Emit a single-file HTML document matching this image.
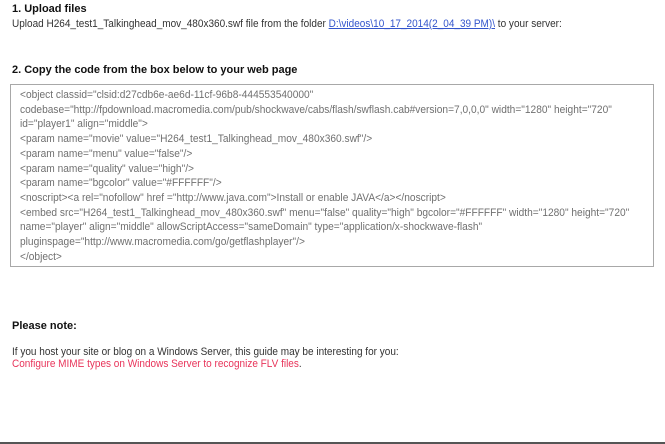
<!DOCTYPE html>
<html><head><meta charset="utf-8"><style>
html,body{margin:0;padding:0;background:#fff;width:665px;height:444px;overflow:hidden;position:relative}
body{font-family:"Liberation Sans",Arial,sans-serif;font-size:11px;color:#333}
.a{position:absolute;left:12px;white-space:nowrap;transform:scaleX(0.91);transform-origin:0 0}
.bb{transform:none}
b{color:#111}
a.l{color:#3355cc;text-decoration:underline}
.box{position:absolute;left:10px;top:84px;width:644px;height:183px;border:1px solid #a8a8a8;box-sizing:border-box}
.code{position:absolute;left:9px;top:3px;line-height:14.7px;color:#707070;white-space:nowrap;transform:scaleX(0.925);transform-origin:0 0}
.bot{position:absolute;left:0;top:442px;width:665px;height:2px;background:#555}
</style></head><body>
<div class="a bb" style="top:3px"><b>1. Upload files</b></div>
<div class="a" style="top:18px">Upload H264_test1_Talkinghead_mov_480x360.swf file from the folder <a class="l">D:\videos\10_17_2014(2_04_39 PM)\</a> to your server:</div>
<div class="a bb" style="top:64px"><b>2. Copy the code from the box below to your web page</b></div>
<div class="box"><div class="code">&lt;object classid="clsid:d27cdb6e-ae6d-11cf-96b8-444553540000"<br>codebase="http://fpdownload.macromedia.com/pub/shockwave/cabs/flash/swflash.cab#version=7,0,0,0" width="1280" height="720"<br>id="player1" align="middle"&gt;<br>&lt;param name="movie" value="H264_test1_Talkinghead_mov_480x360.swf"/&gt;<br>&lt;param name="menu" value="false"/&gt;<br>&lt;param name="quality" value="high"/&gt;<br>&lt;param name="bgcolor" value="#FFFFFF"/&gt;<br>&lt;noscript&gt;&lt;a rel="nofollow" href ="http://www.java.com"&gt;Install or enable JAVA&lt;/a&gt;&lt;/noscript&gt;<br>&lt;embed src="H264_test1_Talkinghead_mov_480x360.swf" menu="false" quality="high" bgcolor="#FFFFFF" width="1280" height="720"<br>name="player" align="middle" allowScriptAccess="sameDomain" type="application/x-shockwave-flash"<br>pluginspage="http://www.macromedia.com/go/getflashplayer"/&gt;<br>&lt;/object&gt;</div></div>
<div class="a bb" style="top:320px"><b>Please note:</b></div>
<div class="a" style="top:346px">If you host your site or blog on a Windows Server, this guide may be interesting for you:</div>
<div class="a" style="top:358px"><span style="color:#e8345a">Configure MIME types on Windows Server to recognize FLV files</span>.</div>
<div class="bot"></div>
</body></html>
